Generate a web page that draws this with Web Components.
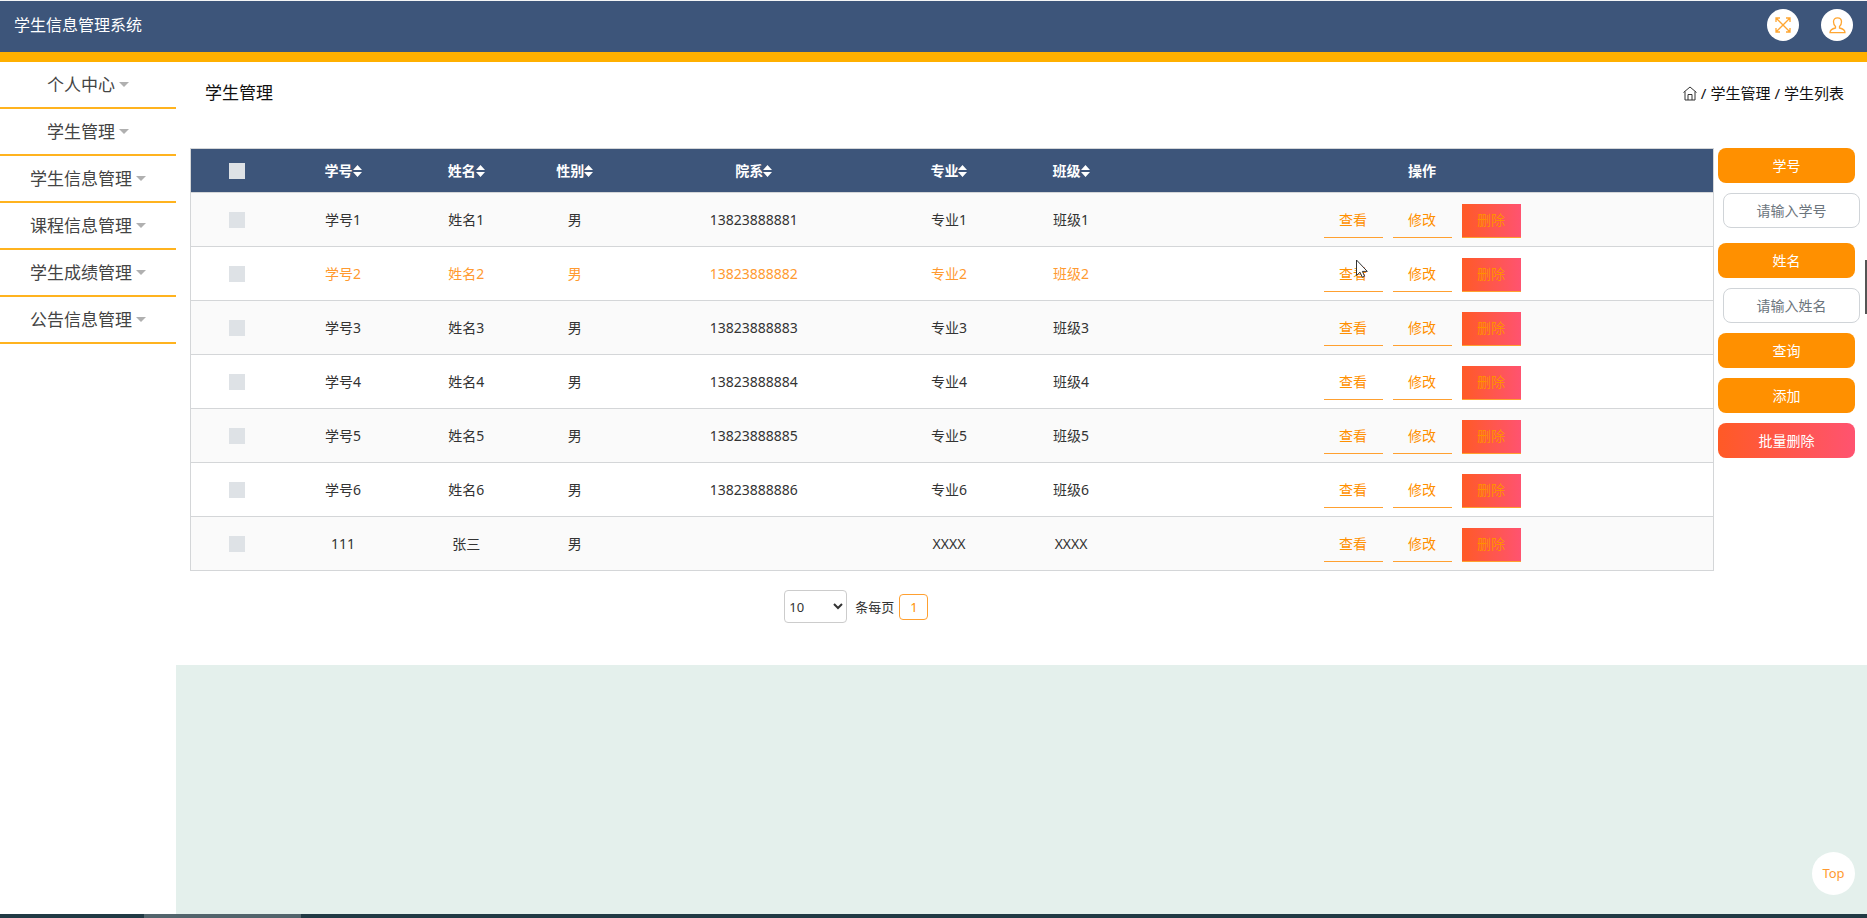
<!DOCTYPE html>
<html lang="zh-CN">
<head>
<meta charset="utf-8">
<title>学生信息管理系统</title>
<style>
  :root {
    --navy: #3d557a;
    --amber: #ffb000;
    --orange: #ff9000;
    --danger: linear-gradient(90deg, #ff5a26, #ff5370);
    --line: #d4d6d8;
  }
  body {
    margin: 0;
    font-family: "Noto Sans", "Noto Sans CJK SC", sans-serif;
    font-size: 14px;
    line-height: 20px;
    color: #333;
    background: #fff;
  }
</style>
</head>
<body>
<student-app></student-app>

<script>
class AppHeader extends HTMLElement {
  constructor() {
    super();
    this.attachShadow({ mode: 'open' });
    this.shadowRoot.innerHTML = `
      <style>
        :host {
          display: flex;
          align-items: center;
          justify-content: space-between;
          box-sizing: border-box;
          height: 62px;
          padding: 0 14px 3px;
          color: #fff;
          background: var(--navy);
          border-top: 1px solid #f4f5f6;
          border-bottom: 10px solid var(--amber);
        }
        h1 {
          margin: 0;
          font-size: 16px;
          font-weight: 400;
          line-height: 24px;
        }
        .tools {
          display: flex;
          gap: 22px;
        }
        button {
          display: flex;
          align-items: center;
          justify-content: center;
          width: 32px;
          height: 32px;
          padding: 0;
          border: none;
          border-radius: 50%;
          background: #fff;
          cursor: pointer;
        }
        svg {
          fill: none;
          stroke: #ffa632;
          stroke-width: 1.3;
        }
      </style>
      <h1><slot></slot></h1>
      <div class="tools">
        <button type="button" aria-label="全屏">
          <svg width="16" height="16" viewBox="0 0 16 16">
            <path d="M1 5V1h4M11 1h4v4M15 11v4h-4M5 15H1v-4M1 1l14 14M15 1L1 15"/>
          </svg>
        </button>
        <button type="button" aria-label="个人">
          <svg width="17" height="17" viewBox="0 0 17 17">
            <path d="M6.5 9.500C5 8.300 4.500 6.500 4.500 4.800 4.500 2.300 6 .8 8.500 .8s4 1.500 4 4c0 1.700-.5 3.500-2 4.700v1.500c3 .6 5.500 1.700 5.500 4.700H1c0-3 2.500-4.100 5.500-4.700z"/>
          </svg>
        </button>
      </div>
    `;
  }
}

class MenuItem extends HTMLElement {
  constructor() {
    super();
    this.attachShadow({ mode: 'open' });
    this.shadowRoot.innerHTML = `
      <style>
        :host {
          display: block;
          border-bottom: 2px solid #ffb31f;
        }
        button {
          display: flex;
          align-items: center;
          justify-content: center;
          gap: 4px;
          width: 100%;
          height: 45px;
          padding: 0;
          border: none;
          background: none;
          color: #444;
          font: inherit;
          font-size: 17px;
          cursor: pointer;
        }
        .caret {
          border: 5px solid transparent;
          border-top-color: #b0b0b0;
          border-bottom: none;
        }
      </style>
      <button type="button"><slot></slot><span class="caret"></span></button>
    `;
  }
}

class PageHeading extends HTMLElement {
  constructor() {
    super();
    this.attachShadow({ mode: 'open' });
    this.shadowRoot.innerHTML = `
      <style>
        :host {
          display: flex;
          align-items: center;
          justify-content: space-between;
          padding: 19px 23px 43px 29px;
          color: #111;
        }
        h2 {
          margin: 0;
          font-size: 17px;
          font-weight: 400;
          line-height: 24px;
        }
        nav {
          display: flex;
          align-items: center;
          gap: 4px;
          font-size: 15px;
        }
        a {
          color: inherit;
          text-decoration: none;
        }
        svg {
          display: block;
          fill: none;
          stroke: #333;
        }
      </style>
      <h2><slot></slot></h2>
      <nav>
        <a href="#home" aria-label="首页">
          <svg width="14" height="15" viewBox="0 0 14 15">
            <path d="M.5 6.500L7 1l6.500 5.500M2 5.500v8.500h10V5.500M5 14V8.500h4V14"/>
          </svg>
        </a>
        <span>/</span>
        <a href="#students">学生管理</a>
        <span>/</span>
        <a href="#list">学生列表</a>
      </nav>
    `;
  }
}

const columns = [
  { name: '学号', width: 121 },
  { name: '姓名', width: 125 },
  { name: '性别', width: 92 },
  { name: '院系', width: 266 },
  { name: '专业', width: 124 },
  { name: '班级', width: 120 }
];

const students = [
  ['学号1', '姓名1', '男', '13823888881', '专业1', '班级1'],
  ['学号2', '姓名2', '男', '13823888882', '专业2', '班级2'],
  ['学号3', '姓名3', '男', '13823888883', '专业3', '班级3'],
  ['学号4', '姓名4', '男', '13823888884', '专业4', '班级4'],
  ['学号5', '姓名5', '男', '13823888885', '专业5', '班级5'],
  ['学号6', '姓名6', '男', '13823888886', '专业6', '班级6'],
  ['111', '张三', '男', '', 'XXXX', 'XXXX']
];

class StudentTable extends HTMLElement {
  constructor() {
    super();
    this.attachShadow({ mode: 'open' });
    this.shadowRoot.innerHTML = `
      <style>
        :host {
          display: block;
        }
        table {
          width: 100%;
          table-layout: fixed;
          border-collapse: collapse;
          border: 1px solid var(--line);
        }
        th, td {
          padding: 0;
          text-align: center;
          border-bottom: 1px solid var(--line);
        }
        thead tr {
          height: 44px;
          color: #fff;
          background: var(--navy);
        }
        tbody tr {
          height: 54px;
        }
        tbody tr:nth-child(odd) {
          background: #fafafa;
        }
        tr.active {
          color: #ff9a30;
        }
        th > span {
          display: inline-flex;
          align-items: center;
        }
        .sort {
          fill: #fff;
        }
        input {
          display: block;
          appearance: none;
          width: 16px;
          height: 16px;
          margin: 0 auto;
          background: #dee2e6;
        }
        input:checked {
          background: var(--orange);
        }
        .actions {
          display: flex;
          justify-content: center;
          gap: 10px;
          padding-top: 2px;
        }
        button {
          position: relative;
          width: 59px;
          height: 34px;
          padding: 0;
          border: none;
          border-bottom: 1px solid #ffa030;
          background: none;
          color: var(--orange);
          font: inherit;
          cursor: pointer;
        }
        button.delete {
          background: var(--danger);
        }
        .pointer {
          position: absolute;
          left: 32px;
          top: 1px;
          fill: #fff;
          stroke: #333;
        }
      </style>
      <table>
        <colgroup>
          <col style="width: 92px">
          ${columns.map(c => `<col style="width: ${c.width}px">`).join('')}
          <col style="width: 582px">
        </colgroup>
        <thead>
          <tr>
            <th><input type="checkbox" aria-label="全选"></th>
            ${columns.map(c => `
              <th><span>${c.name}<svg class="sort" width="9" height="12" viewBox="0 0 9 12"><path d="M4.500 0L9 5H0zM4.500 12L9 7H0z"/></svg></span></th>
            `).join('')}
            <th>操作</th>
          </tr>
        </thead>
        <tbody>
          ${students.map((row, i) => this.renderRow(row, i)).join('')}
        </tbody>
      </table>
    `;
  }

  renderRow(row, i) {
    const active = i === 1;
    // mouse pointer over the highlighted row
    const pointer = active ? `
      <svg class="pointer" width="12" height="19" viewBox="0 0 12 19">
        <path d="M.5 1v15.500l3.500-3.300 2.300 5 2.300-1-2.200-4.800h4.900z"/>
      </svg>` : '';
    return `
      <tr class="${active ? 'active' : ''}">
        <td><input type="checkbox" aria-label="选择${row[0]}"></td>
        ${row.map(value => `<td>${value}</td>`).join('')}
        <td>
          <div class="actions">
            <button type="button">查看${pointer}</button>
            <button type="button">修改</button>
            <button type="button" class="delete">删除</button>
          </div>
        </td>
      </tr>
    `;
  }
}

class TablePager extends HTMLElement {
  constructor() {
    super();
    this.attachShadow({ mode: 'open' });
    this.shadowRoot.innerHTML = `
      <style>
        :host {
          display: flex;
          align-items: center;
          padding: 19px 0 0 39%;
          font-size: 13px;
        }
        select {
          width: 63px;
          height: 33px;
          margin-right: 8px;
          padding: 0;
          border: 1px solid #ccc;
          border-radius: 4px;
          background: #fff;
          color: #333;
          font: inherit;
        }
        button {
          width: 29px;
          height: 26px;
          margin-left: 5px;
          padding: 0;
          border: 1px solid #ffa030;
          border-radius: 4px;
          background: #fff;
          color: var(--orange);
          font: inherit;
        }
      </style>
      <select id="size">
        <option>10</option>
        <option>20</option>
        <option>50</option>
      </select>
      <label for="size">条每页</label>
      <button type="button">1</button>
    `;
  }
}

class SearchPanel extends HTMLElement {
  constructor() {
    super();
    this.attachShadow({ mode: 'open' });
    this.shadowRoot.innerHTML = `
      <style>
        :host {
          display: block;
        }
        form {
          display: flex;
          flex-direction: column;
          gap: 10px;
        }
        label, button, input {
          box-sizing: border-box;
          height: 35px;
          border-radius: 8px;
          font: inherit;
          text-align: center;
        }
        label, button {
          margin-right: 5px;
          padding: 0;
          border: none;
          color: #fff;
          background: var(--orange);
          line-height: 35px;
        }
        button {
          cursor: pointer;
        }
        button.danger {
          background: var(--danger);
        }
        input {
          min-width: 0;
          margin-left: 5px;
          padding: 0 10px;
          border: 1px solid #d0d4d8;
          color: #333;
          background: #fff;
        }
        #number {
          margin-bottom: 5px;
        }
        input::placeholder {
          color: #6c757d;
        }
      </style>
      <form>
        <label for="number">学号</label>
        <input id="number" type="text" placeholder="请输入学号">
        <label for="name">姓名</label>
        <input id="name" type="text" placeholder="请输入姓名">
        <button type="button">查询</button>
        <button type="button">添加</button>
        <button type="button" class="danger">批量删除</button>
      </form>
    `;
  }
}

class BackTop extends HTMLElement {
  constructor() {
    super();
    this.attachShadow({ mode: 'open' });
    this.shadowRoot.innerHTML = `
      <style>
        :host {
          position: fixed;
          right: 12px;
          bottom: 23px;
        }
        a {
          display: block;
          width: 43px;
          height: 43px;
          border-radius: 50%;
          background: #fff;
          color: #ff9a30;
          font-size: 13px;
          line-height: 43px;
          text-align: center;
          text-decoration: none;
        }
      </style>
      <a href="#top">Top</a>
    `;
  }
}

class StudentApp extends HTMLElement {
  constructor() {
    super();
    this.attachShadow({ mode: 'open' });
    this.shadowRoot.innerHTML = `
      <style>
        :host {
          display: flex;
          flex-direction: column;
          min-height: 100vh;
        }
        .body {
          flex: 1;
          display: grid;
          grid-template-columns: 176px 1fr;
        }
        .main {
          background: #e4f0ec;
        }
        .page {
          padding-bottom: 42px;
          background: #fff;
        }
        .content {
          display: grid;
          grid-template-columns: 1fr 142px;
          gap: 4px;
          padding: 0 7px 0 14px;
        }
        .taskbar {
          display: flex;
          height: 4px;
          background: #213a44;
        }
        .taskbar span {
          width: 157px;
          margin-left: 144px;
          background: #52646c;
        }
        .thumb {
          position: absolute;
          top: 260px;
          right: 0;
          width: 2px;
          height: 54px;
          background: #555;
        }
      </style>
      <app-header>学生信息管理系统</app-header>
      <div class="body">
        <nav>
          <menu-item>个人中心</menu-item>
          <menu-item>学生管理</menu-item>
          <menu-item>学生信息管理</menu-item>
          <menu-item>课程信息管理</menu-item>
          <menu-item>学生成绩管理</menu-item>
          <menu-item>公告信息管理</menu-item>
        </nav>
        <div class="main">
          <div class="page">
            <page-heading>学生管理</page-heading>
            <div class="content">
              <div>
                <student-table></student-table>
                <table-pager></table-pager>
              </div>
              <search-panel></search-panel>
            </div>
          </div>
        </div>
      </div>
      <div class="taskbar"><span></span></div>
      <div class="thumb"></div>
      <back-top></back-top>
    `;
  }
}

customElements.define('app-header', AppHeader);
customElements.define('menu-item', MenuItem);
customElements.define('page-heading', PageHeading);
customElements.define('student-table', StudentTable);
customElements.define('table-pager', TablePager);
customElements.define('search-panel', SearchPanel);
customElements.define('back-top', BackTop);
customElements.define('student-app', StudentApp);
</script>
</body>
</html>
